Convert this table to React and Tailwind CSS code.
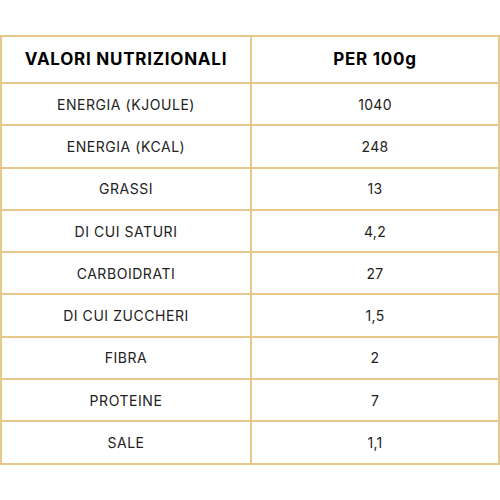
import React from "react";

const rows = [
  ["ENERGIA (KJOULE)", "1040"],
  ["ENERGIA (KCAL)", "248"],
  ["GRASSI", "13"],
  ["DI CUI SATURI", "4,2"],
  ["CARBOIDRATI", "27"],
  ["DI CUI ZUCCHERI", "1,5"],
  ["FIBRA", "2"],
  ["PROTEINE", "7"],
  ["SALE", "1,1"],
];

export default function App() {
  return (
    <div className="w-[500px] h-[500px] bg-white pt-[35px]" style={{ fontFamily: "Inter, 'Noto Sans', sans-serif" }}>
      <table className="w-[500px] border-collapse">
        <thead>
          <tr className="h-[47px]">
            <th className="border-2 border-[#e6c98a] w-[250px] text-[17px] font-bold text-black text-center tracking-[0.75px]">VALORI NUTRIZIONALI</th>
            <th className="border-2 border-[#e6c98a] text-[17px] font-bold text-black text-center tracking-[0.75px]">PER 100g</th>
          </tr>
        </thead>
        <tbody>
          {rows.map(([a, b]) => (
            <tr key={a} className="h-[42.3px]">
              <td className="border-2 border-[#e6c98a] text-center text-[14px] text-[#222] font-normal tracking-[0.55px]">{a}</td>
              <td className="border-2 border-[#e6c98a] text-center text-[14px] text-[#222] font-normal tracking-[0.3px]">{b}</td>
            </tr>
          ))}
        </tbody>
      </table>
    </div>
  );
}
